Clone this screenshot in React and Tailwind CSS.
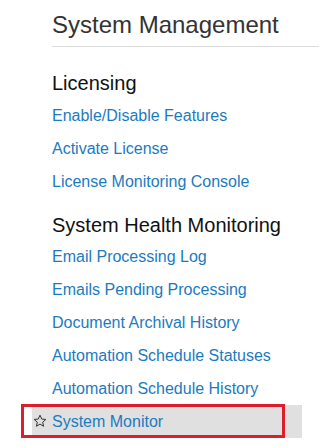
import React from "react";

const group1 = ["Enable/Disable Features", "Activate License", "License Monitoring Console"];
const group2 = [
  "Email Processing Log",
  "Emails Pending Processing",
  "Document Archival History",
  "Automation Schedule Statuses",
  "Automation Schedule History",
];

function LinkRow({ label }) {
  return (
    <div className="-ml-[20px] mr-[17px] pl-[20px] h-[33px] flex items-center">
      <a className="text-[16px] leading-[33px] text-[#1b7bbf] whitespace-nowrap" href="#">
        {label}
      </a>
    </div>
  );
}

export default function App() {
  return (
    <div
      className="w-[319px] h-[447px] bg-white overflow-hidden pl-[52px] pt-[12px]"
      style={{ fontFamily: '"Liberation Sans", Arial, sans-serif' }}
    >
      <h1 className="text-[24px] leading-[26px] text-[#333333] pb-[8px] border-b border-[#dcdcdc]">
        System Management
      </h1>
      <h2 className="mt-[25px] mb-[5px] text-[20px] leading-[22px] text-[#111111]">Licensing</h2>
      {group1.map((l) => (
        <LinkRow key={l} label={l} />
      ))}
      <h2 className="mt-[16px] mb-[4px] text-[20px] leading-[22px] text-[#111111]">
        System Health Monitoring
      </h2>
      {group2.map((l) => (
        <LinkRow key={l} label={l} />
      ))}
      <div className="relative -ml-[20px] mr-[17px] pl-[20px] h-[33px] flex items-center bg-[#e0e0e0]">
        <svg
          className="absolute left-[1px] top-[9px]"
          width="14"
          height="14"
          viewBox="0 0 24 24"
          fill="none"
          stroke="#333333"
          strokeWidth="1.7"
          strokeLinejoin="miter"
        >
          <polygon points="12,2 14.9,8.6 22,9.3 16.6,14 18.2,21 12,17.3 5.8,21 7.4,14 2,9.3 9.1,8.6" />
        </svg>
        <a className="text-[16px] leading-[33px] text-[#1b7bbf] whitespace-nowrap" href="#">
          System Monitor
        </a>
        <div className="absolute left-[-11px] top-[-1px] w-[264px] h-[34px] border-[3px] border-[#dc1f2c] pointer-events-none" />
      </div>
    </div>
  );
}
